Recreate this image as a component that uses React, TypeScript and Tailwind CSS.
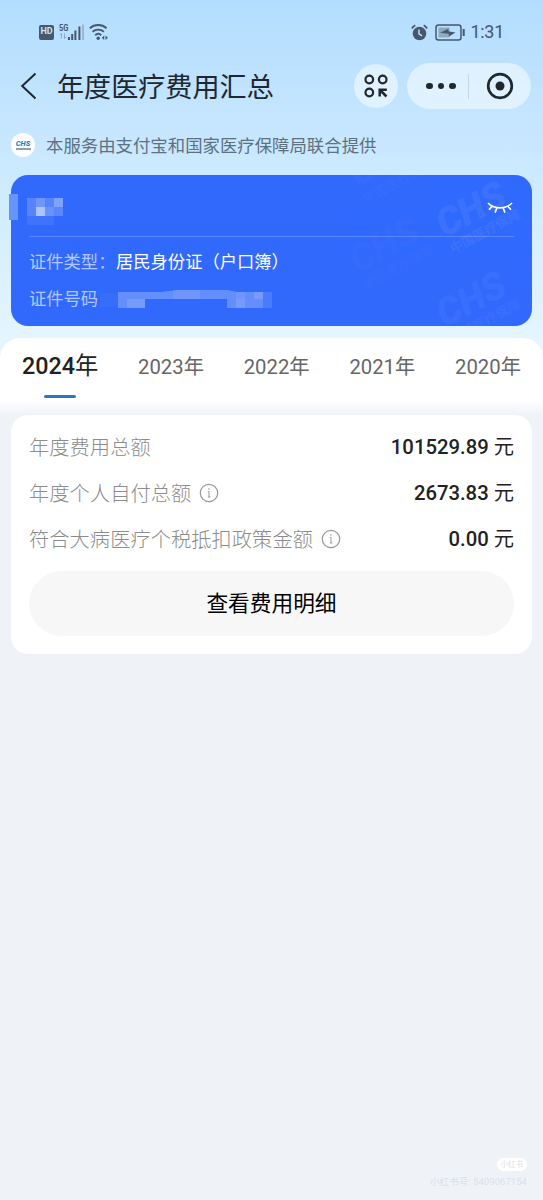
import React, { useState } from 'react'

interface YearSummary {
  label: string
  amount: string
  hint?: boolean
}

const YEARS = ['2024', '2023', '2022', '2021', '2020']

const SUMMARY: YearSummary[] = [
  { label: '年度费用总额', amount: '101529.89' },
  { label: '年度个人自付总额', amount: '2673.83', hint: true },
  { label: '符合大病医疗个税抵扣政策金额', amount: '0.00', hint: true },
]

const StatusBar: React.FC = () => (
  <div className="flex h-[64px] items-center justify-between pr-[39px] pl-[39px] text-[#46586a]">
    <div className="flex items-center">
      <div className="flex h-[15px] w-[15px] items-center justify-center rounded-[2px] bg-[#46586a] text-[9px] font-bold text-[#c5e6fd]">
        HD
      </div>
      <svg className="ml-[5px]" width="26" height="18" viewBox="0 0 26 18">
        <text x="0" y="7.5" fontSize="9" fontWeight="700" fill="#46586a" textLength="9.5" lengthAdjust="spacingAndGlyphs">
          5G
        </text>
        <path d="M2.5 10.5v5M1 12l1.5-1.5M5.5 10.5v5M7 14l-1.5 1.5" stroke="#93aabd" fill="none" />
        <path
          d="M10 14v3M13.2 11v6M16.4 7.5v9.5M20.4 3.5V17"
          stroke="#46586a"
          strokeWidth="2"
          fill="none"
        />
        <path d="M24 1.5V17" stroke="#93aabd" strokeWidth="1.5" />
      </svg>
      <svg className="ml-[4px]" width="20" height="18" viewBox="0 0 20 18" fill="none">
        <g stroke="#46586a" strokeWidth="1.9">
          <path d="M.8 5.200a12.500 12.500 0 0 1 16.800 0" />
          <path d="M3.600 8.800a8.300 8.300 0 0 1 11.200 0" />
          <path d="M6.200 12.200a4.500 4.500 0 0 1 6 0" />
        </g>
        <circle cx="9.2" cy="15.2" r="1.7" fill="#46586a" />
        <path d="M15.200 12.500v4.500L12.800 14.700zM16.500 12.500v4.500l2.400-2.300z" fill="#46586a" />
      </svg>
    </div>
    <div className="flex items-center">
      <svg className="mr-[7px]" width="17" height="17" viewBox="0 0 17 17" fill="none">
        <circle cx="8.5" cy="9.5" r="6.8" fill="#46586a" />
        <path d="M8 5.500v4.300l3 2" stroke="#c5e6fd" strokeWidth="1.4" />
        <path d="M1 4.500A7 7 0 0 1 4.300 1.300M12.700 1.300A7 7 0 0 1 16 4.500" stroke="#46586a" strokeWidth="1.8" />
      </svg>
      <svg width="30" height="17" viewBox="0 0 30 17" fill="none">
        <rect x="1" y="1" width="25" height="15" rx="2.5" stroke="#46586a" strokeWidth="1.5" />
        <rect x="3.5" y="3.5" width="11" height="10" fill="#8fa9bd" />
        <path d="M5 8.800l8.500-4v2.800h1l6 1-6.500 4-.3-2.800z" fill="#46586a" />
        <path d="M28.700 5v7" stroke="#46586a" strokeWidth="2" />
      </svg>
      <span className="ml-[5px] text-[18px] leading-none tracking-[-0.3px]">1:31</span>
    </div>
  </div>
)

const NavBar: React.FC = () => (
  <div className="flex h-[44px] items-center pr-[12px] pl-[20px] text-[#20282f]">
    <svg width="18" height="28" viewBox="0 0 18 28" fill="none">
      <path d="M15.500 1.500L2.200 14l13.300 12.500" stroke="#20282f" strokeWidth="2" />
    </svg>
    <h1 className="ml-[19px] flex-1 pt-[5px] text-[27.1px] leading-none">年度医疗费用汇总</h1>
    <button className="flex h-[44px] w-[44px] items-center justify-center rounded-full bg-white/50">
      <svg width="24" height="24" viewBox="0 0 24 24" fill="none" stroke="#20282f" strokeWidth="2.2">
        <circle cx="5.3" cy="5.5" r="3.8" />
        <circle cx="18.7" cy="5.5" r="3.8" />
        <circle cx="5.3" cy="18.5" r="3.8" />
        <path d="M15.700 22.500v-6.700H22.800M16 16l6.500 6.500" strokeWidth="2.5" />
      </svg>
    </button>
    <div className="ml-[9px] flex h-[46px] w-[124px] items-center rounded-full bg-white/50">
      <button className="flex flex-1 items-center justify-center gap-[5px] pl-[7px]">
        <span className="h-[6.5px] w-[6.5px] rounded-full bg-[#20282f]" />
        <span className="h-[6.5px] w-[6.5px] rounded-full bg-[#20282f]" />
        <span className="h-[6.5px] w-[6.5px] rounded-full bg-[#20282f]" />
      </button>
      <span className="h-[25px] w-px bg-[#c4d6e4]" />
      <button className="flex w-[62px] justify-center">
        <svg width="28" height="28" viewBox="0 0 28 28">
          <circle cx="14" cy="14" r="11.8" fill="none" stroke="#20282f" strokeWidth="2.7" />
          <circle cx="14" cy="14" r="4.5" fill="#20282f" />
        </svg>
      </button>
    </div>
  </div>
)

const ChsMark: React.FC<{ className: string }> = ({ className }) => (
  <div className={`pointer-events-none absolute -rotate-[28deg] text-white ${className}`}>
    <div className="text-[38px] leading-[36px] font-black italic">CHS</div>
    <div className="text-[13px] leading-[18px] font-bold whitespace-nowrap">中国医疗保障</div>
  </div>
)

// Blocks that cover the holder's name and id number
const Mosaic: React.FC<{ kind: 'name' | 'number' }> = ({ kind }) =>
  kind === 'name' ? (
    <svg width="36" height="28" viewBox="0 0 36 28" fill="#fff" shapeRendering="crispEdges">
      <path d="M0 0h9v18H0z" opacity=".18" />
      <path d="M9 0h9v9H9z" opacity=".3" />
      <path d="M18 0h9v9h-9z" opacity=".18" />
      <path d="M27 0h9v9h-9z" opacity=".38" />
      <path d="M9 9h9v9H9z" opacity=".6" />
      <path d="M18 9h9v9h-9z" opacity=".28" />
      <path d="M27 9h9v9h-9z" opacity=".2" />
      <path d="M0 18h27v9H0z" opacity=".07" />
    </svg>
  ) : (
    <svg width="174" height="20" viewBox="0 0 174 20" fill="#fff">
      <path d="M2 4h18v14H2z" opacity=".03" />
      <path d="M20 3h40c8 0 12-2 24-2h42c8 0 10 2 14 2h25v16h-36v-9H47v9H20z" opacity=".25" />
      <path d="M29 10h18v9H29z" opacity=".12" />
      <path d="M75 1h27v9H75zM138 3h9v7h-9z" opacity=".08" />
      <path d="M138 10h9v9h-9zM156 3h9v7h-9z" opacity=".12" />
      <path d="M165 3h9v16h-9z" opacity=".12" />
    </svg>
  )

const IdCard: React.FC = () => (
  <section className="relative mx-[11px] mt-[11px] h-[151px]">
    <div className="relative flex h-full flex-col overflow-hidden rounded-[17px] bg-[#3169fd] px-[18px]">
      <ChsMark className="top-[14px] left-[427px] opacity-[.055]" />
      <ChsMark className="top-[104px] left-[427px] opacity-[.04]" />
      <ChsMark className="top-[50px] left-[340px] opacity-[.015]" />
      <ChsMark className="-top-[36px] left-[340px] opacity-[.02]" />
      <div className="flex h-[62px] items-center justify-between border-b border-white/20">
        <div className="-ml-[2px] pt-[13px]">
          <Mosaic kind="name" />
        </div>
        <svg
          className="mt-[5px] mr-[1px]"
          width="26"
          height="14"
          viewBox="0 0 26 14"
          fill="none"
          stroke="#fff"
          strokeWidth="1.7"
          strokeLinecap="round"
        >
          <path d="M1.500 2.500c6 5.800 17 5.800 23 0M5 5.200l-2.500 3M9.800 7l-1.500 4M16.200 7l1.500 4M21 5.200l2.500 3" />
        </svg>
      </div>
      <div className="mt-[15px] flex h-[22px] items-center text-[17.3px] leading-none">
        <span className="w-[87px] text-[#b0c8ff]">证件类型：</span>
        <span className="text-white">居民身份证（户口簿）</span>
      </div>
      <div className="mt-[15px] flex h-[22px] items-center text-[17.3px] leading-none">
        <span className="text-[#b0c8ff]">证件号码</span>
        <div className="-mt-[3px]">
          <Mosaic kind="number" />
        </div>
      </div>
    </div>
    <span className="absolute top-[19px] -left-[2px] h-[26px] w-[9px] bg-[#6695fa]" />
  </section>
)

const InfoIcon: React.FC = () => (
  <svg className="ml-[8px]" width="20" height="20" viewBox="0 0 20 20" fill="none" stroke="#999">
    <circle cx="10" cy="10" r="8.7" strokeWidth="1.2" />
    <path d="M8.800 8.500H10V14M8.800 14h2.600" strokeWidth="1" />
    <circle cx="9.900" cy="6" r=".8" fill="#999" stroke="none" />
  </svg>
)

export default function App() {
  const [year, setYear] = useState<string>(YEARS[0])

  return (
    <div className="relative h-[1200px] w-[543px] overflow-hidden bg-[#eff3f8] font-['Roboto','Noto_Sans_CJK_SC',sans-serif]">
      <div className="bg-linear-to-b from-[#b3ddff] to-[#e6f6fe] to-[350px]">
        <StatusBar />
        <NavBar />
        <div className="mt-[22px] flex h-[34px] items-center pb-[4px] pl-[11px]">
          <div className="flex h-[24px] w-[24px] flex-col items-center justify-center rounded-full bg-white">
            <span className="text-[7.5px] leading-[6px] font-black text-[#1b88c4] italic">CHS</span>
            <span className="mt-[1px] h-[2px] w-[15px] bg-[#91a0a8]" />
          </div>
          <span className="ml-[11px] pt-[4px] text-[17.4px] leading-none text-[#5d7180]">
            本服务由支付宝和国家医疗保障局联合提供
          </span>
        </div>
        <IdCard />
        <div className="h-[12px]" />
        <nav className="flex h-[77px] justify-between rounded-t-[20px] bg-linear-to-b from-white from-80% to-[#eff3f8] px-[22px]">
          {YEARS.map((item) => (
            <button
              key={item}
              onClick={() => setYear(item)}
              className={
                item === year
                  ? 'flex flex-col items-center text-[23.3px] leading-none text-[#222]'
                  : 'flex flex-col items-center text-[20.3px] leading-none text-[#666]'
              }
            >
              <span className="flex h-[57px] items-center pt-px whitespace-nowrap">
                <span className={item === year ? 'font-medium' : ''}>{item}</span>年
              </span>
              {item === year && <span className="h-[3px] w-[32px] rounded-full bg-[#2f75c5]" />}
            </button>
          ))}
        </nav>
      </div>
      <main className="mx-[11px] h-[239px] rounded-[17px] bg-white px-[18px] pt-[9px]">
        {SUMMARY.map(({ label, amount, hint }) => (
          <div key={label} className="flex h-[46px] items-center justify-between text-[20.3px] leading-none">
            <div className="flex items-center font-light text-[#8c8c8c]">
              <span className="pt-[2px]">{label}</span>
              {hint && <InfoIcon />}
            </div>
            <span className="text-[#222]">
              <span className="font-medium">{amount}</span> 元
            </span>
          </div>
        ))}
        <button className="mt-[9px] flex h-[65px] w-full items-center justify-center rounded-full bg-[#f7f7f7] pt-px text-[21.7px] leading-none text-black">
          查看费用明细
        </button>
      </main>
      <footer className="absolute right-[16px] bottom-[12px] flex flex-col items-end text-[#dce0e5]">
        <span className="rounded-full bg-white px-[4px] py-[2px] text-[7.5px] leading-[9px]">小红书</span>
        <span className="mt-[5px] text-[9.6px] leading-[12px]">小红书号: 5409067154</span>
      </footer>
    </div>
  )
}
